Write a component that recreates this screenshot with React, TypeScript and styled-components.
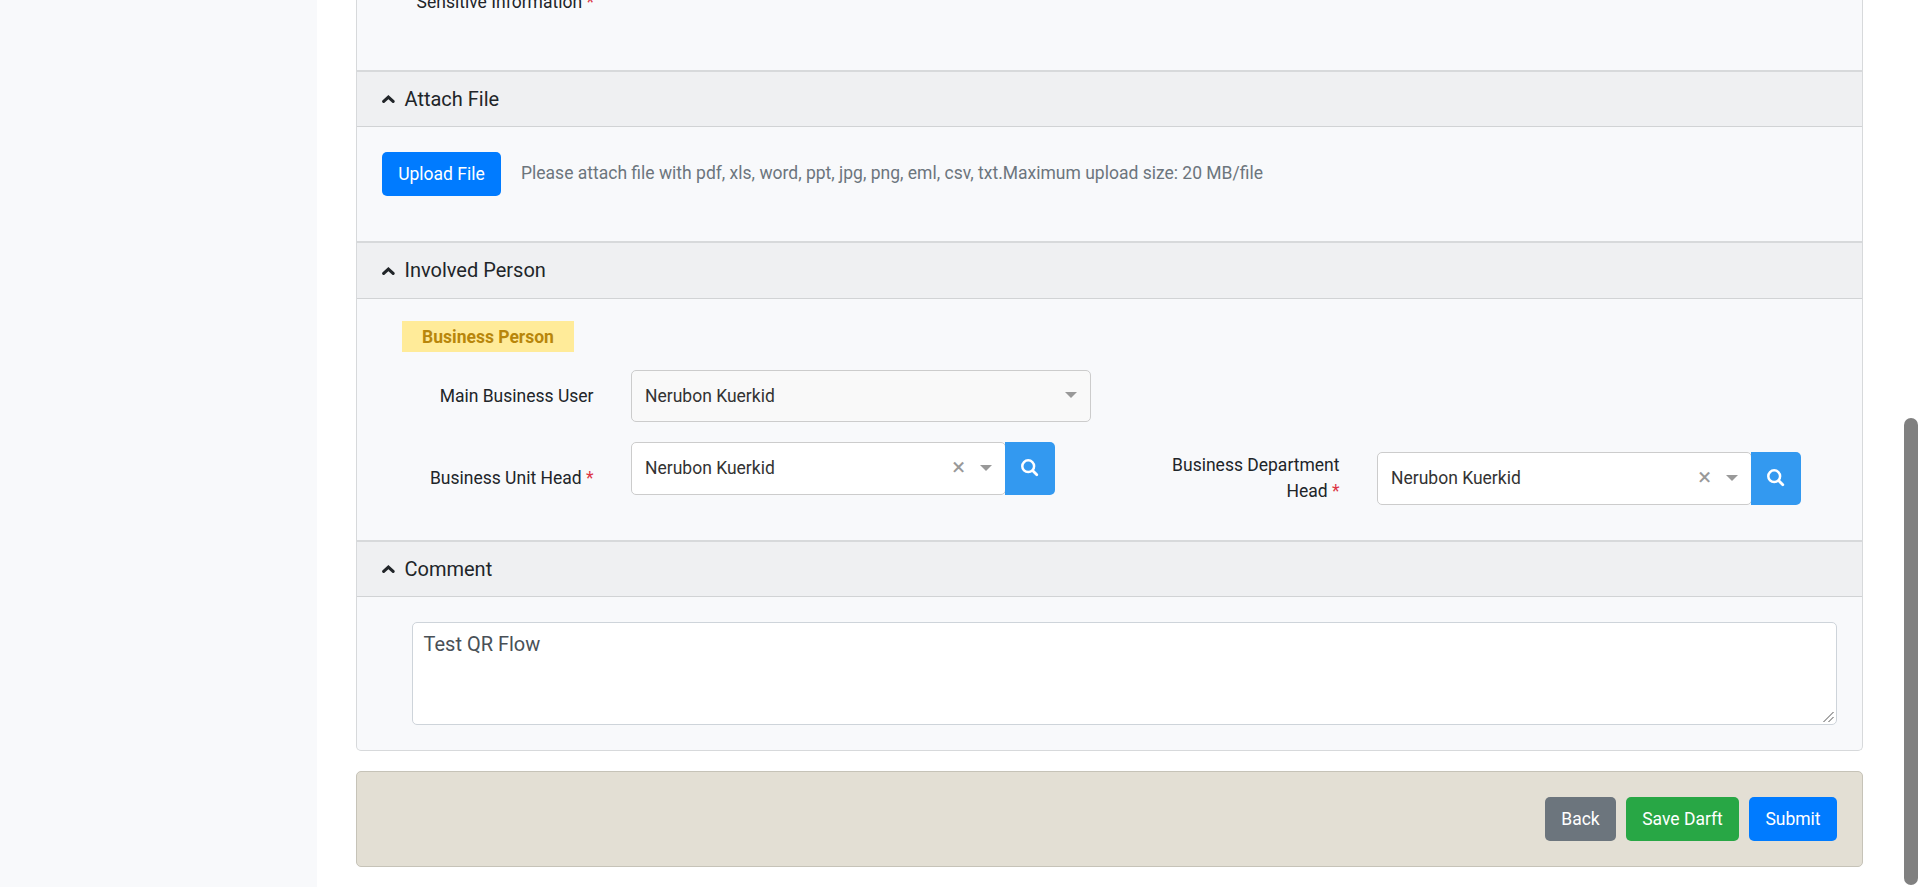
import React from "react";
import styled, { createGlobalStyle, css } from "styled-components";

const GlobalStyle = createGlobalStyle`
  *, *::before, *::after { box-sizing: border-box; }
  html, body { margin: 0; background: #fff; }
  body {
    height: 887px;
    overflow: hidden;
    font-family: Roboto, sans-serif;
    font-size: 17.5px;
    line-height: 26px;
    color: #212529;
  }
`;

const Page = styled.div`
  display: flex;
  height: 887px;
  overflow: hidden;
`;

const Sidebar = styled.aside`
  flex: 0 0 317px;
  background: #f8f9fb;
`;

const Main = styled.main`
  flex: 1;
  display: flex;
  flex-direction: column;
  gap: 20px;
  padding: 0 41px 0 39px;
`;

const ScrollTrack = styled.div`
  flex: 0 0 16px;
  padding-top: 418px;
`;

const ScrollThumb = styled.div`
  width: 14px;
  height: 467px;
  border-radius: 7px;
  background: #808080;
`;

const Accordion = styled.div`
  height: 751px;
  display: flex;
  flex-direction: column;
  background: #f8f9fb;
  border: 1px solid #d7d9db;
  border-top: 0;
  border-radius: 0 0 5px 5px;
`;

const SectionBody = styled.div<{ $height: number }>`
  height: ${(p) => p.$height}px;
  overflow: hidden;
`;

const SectionHeader = styled.header<{ $height: number }>`
  height: ${(p) => p.$height}px;
  display: flex;
  align-items: center;
  gap: 8.5px;
  padding: 0 25px 1px;
  background: #eff0f2;
  border-top: 2px solid #d7d9db;
  border-bottom: 1px solid #d1d3d5;
  font-size: 20px;

  svg { flex: none; }
`;

const ClippedLabel = styled.div`
  width: 237px;
  margin-top: -11px;
  text-align: right;
`;

const Required = styled.span`
  color: #dc3545;
`;

const UploadRow = styled.div`
  display: flex;
  align-items: flex-start;
  gap: 20px;
  padding: 25px;
`;

const Hint = styled.span`
  padding-top: 8px;
  color: #6c757d;
`;

const tones = { primary: "#007bff", secondary: "#6c757d", success: "#28a745" };

const Button = styled.button<{ $tone: keyof typeof tones; $width: number }>`
  width: ${(p) => p.$width}px;
  height: 44px;
  padding: 0 0 1px;
  border: 0;
  border-radius: 5px;
  background: ${(p) => tones[p.$tone]};
  color: #fff;
  font: 400 17.5px/26px Roboto, sans-serif;
  white-space: nowrap;
`;

const GroupTag = styled.div`
  width: 172px;
  height: 31px;
  margin: 22px 0 18px 45px;
  background: #ffeb99;
  color: #b8860b;
  font-weight: 700;
  line-height: 32px;
  text-align: center;
`;

const FieldRow = styled.div`
  display: flex;
  align-items: flex-start;
  margin-bottom: 20px;
`;

const FieldLabel = styled.label<{ $width: number; $top: number }>`
  width: ${(p) => p.$width}px;
  padding-top: ${(p) => p.$top}px;
  padding-right: 37.5px;
  text-align: right;
`;

const InputGroup = styled.div<{ $top?: number }>`
  display: flex;
  margin-top: ${(p) => p.$top ?? 0}px;
`;

const Value = styled.span`
  flex: 1;
`;

const Clear = styled.span`
  margin: 0 15px 2px 0;
  color: #999;
  font-size: 24px;
`;

const Caret = styled.span`
  margin-top: 1px;
  border: solid transparent;
  border-width: 6px 6px 0;
  border-top-color: #999;
`;

const SelectBox = styled.div<{ $disabled?: boolean }>`
  display: flex;
  align-items: center;
  width: 375px;
  height: 53px;
  padding: 0 13px 2px 13px;
  background: #fff;
  border: 1px solid #ccc;
  border-radius: 5px;
  color: #333;
  ${(p) =>
    p.$disabled &&
    css`
      width: 460px;
      height: 52px;
      padding-bottom: 1px;
      background: #f9f9f9;

      ${Caret} { margin: 0 0 1px; }
    `}
`;

const SearchButton = styled.button`
  width: 50px;
  height: 53px;
  margin-left: -1px;
  padding: 0 0 1px;
  display: flex;
  align-items: center;
  justify-content: center;
  border: 0;
  border-radius: 0 5px 5px 0;
  background: #3399f0;
`;

const CommentField = styled.div`
  position: relative;
  width: 1425px;
  height: 103px;
  margin: 25px 0 0 55px;
`;

const CommentArea = styled.textarea`
  display: block;
  width: 100%;
  height: 100%;
  padding: 6px 10.5px;
  border: 1px solid #ced4da;
  border-radius: 5px;
  background: #fff;
  color: #495057;
  font: 400 20px/30px Roboto, sans-serif;
  resize: none;
`;

const ResizeGrip = styled.svg`
  position: absolute;
  right: 2px;
  bottom: 2px;
`;

const ActionBar = styled.footer`
  display: flex;
  justify-content: flex-end;
  align-items: center;
  gap: 10px;
  height: 96px;
  padding: 0 25px;
  background: #e3dfd4;
  border: 1px solid #c6c3b8;
  border-radius: 5px;
`;

const ChevronIcon = () => (
  <svg width="14" height="15" viewBox="0 0 14 15" fill="none" stroke="#212529">
    <path d="M1.7 10.4L6.4 6.1L11.1 10.4" strokeWidth="3.1" strokeLinecap="round" />
  </svg>
);

const SearchIcon = () => (
  <svg width="18" height="18" viewBox="0 0 18 18" fill="none" stroke="#fff">
    <circle cx="7.2" cy="7.2" r="5.9" strokeWidth="2.5" />
    <path d="M11.8 11.8l4 4" strokeWidth="2.8" strokeLinecap="round" />
  </svg>
);

const Header = ({ title, height = 57 }: { title: string; height?: number }) => (
  <SectionHeader $height={height}>
    <ChevronIcon />
    {title}
  </SectionHeader>
);

const PersonLookup = ({ name, top }: { name: string; top?: number }) => (
  <InputGroup $top={top}>
    <SelectBox>
      <Value>{name}</Value>
      <Clear>×</Clear>
      <Caret />
    </SelectBox>
    <SearchButton aria-label="Search">
      <SearchIcon />
    </SearchButton>
  </InputGroup>
);

export default function App() {
  return (
    <>
      <GlobalStyle />
      <Page>
        <Sidebar />
        <Main>
          <Accordion>
            <SectionBody $height={70}>
              <ClippedLabel>
                Sensitive Information <Required>*</Required>
              </ClippedLabel>
            </SectionBody>

            <Header title="Attach File" />
            <SectionBody $height={114}>
              <UploadRow>
                <Button $tone="primary" $width={119}>Upload File</Button>
                <Hint>
                  Please attach file with pdf, xls, word, ppt, jpg, png, eml, csv, txt.Maximum upload size: 20 MB/file
                </Hint>
              </UploadRow>
            </SectionBody>

            <Header title="Involved Person" height={58} />
            <SectionBody $height={241}>
              <GroupTag>Business Person</GroupTag>
              <FieldRow>
                <FieldLabel $width={274} $top={13}>Main Business User</FieldLabel>
                <SelectBox $disabled>
                  <Value>Nerubon Kuerkid</Value>
                  <Caret />
                </SelectBox>
              </FieldRow>
              <FieldRow>
                <FieldLabel $width={274} $top={23}>
                  Business Unit Head <Required>*</Required>
                </FieldLabel>
                <PersonLookup name="Nerubon Kuerkid" />
                <FieldLabel $width={322} $top={10}>
                  Business Department
                  <br />
                  Head <Required>*</Required>
                </FieldLabel>
                <PersonLookup name="Nerubon Kuerkid" top={10} />
              </FieldRow>
            </SectionBody>

            <Header title="Comment" />
            <CommentField>
              <CommentArea defaultValue="Test QR Flow" />
              <ResizeGrip width="12" height="12" viewBox="0 0 12 12" stroke="#555" strokeWidth="1">
                <path d="M0.5 11L10.5 1M5.5 11L10.5 6" />
              </ResizeGrip>
            </CommentField>
          </Accordion>

          <ActionBar>
            <Button $tone="secondary" $width={71}>Back</Button>
            <Button $tone="success" $width={113}>Save Darft</Button>
            <Button $tone="primary" $width={88}>Submit</Button>
          </ActionBar>
        </Main>
        <ScrollTrack>
          <ScrollThumb />
        </ScrollTrack>
      </Page>
    </>
  );
}
